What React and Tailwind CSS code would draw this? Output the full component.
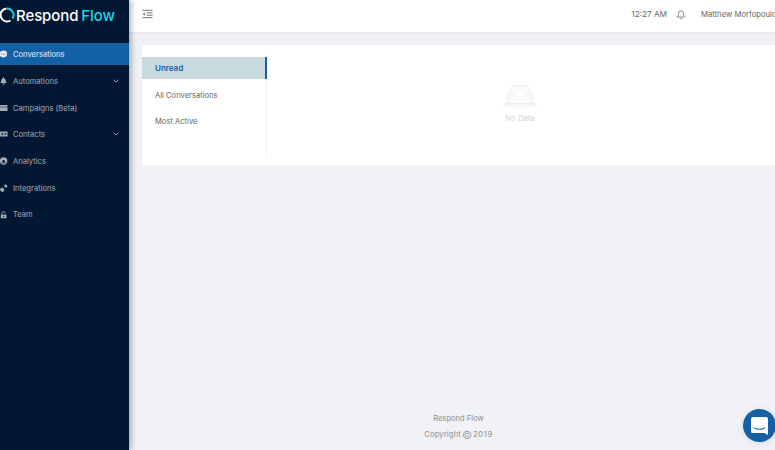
import React from 'react';
import { ChevronDown, Bell } from 'lucide-react';

function ChatIcon() {
  return (
    <svg viewBox="0 0 8 8" className="w-[8px] h-[8px]" fill="currentColor">
      <ellipse cx="3.4" cy="4" rx="3.7" ry="3.4" />
      <circle cx="1.800" cy="4" r="0.5" fill="#1460a5" />
      <circle cx="3.400" cy="4" r="0.5" fill="#1460a5" />
      <circle cx="5" cy="4" r="0.5" fill="#1460a5" />
    </svg>
  );
}

function RobotIcon() {
  return (
    <svg viewBox="0 0 8 8" className="w-[8px] h-[8px]" fill="currentColor">
      <path d="M3 0.300h1v1.200c1.300.3 1.700 1.200 1.800 2.500l.7 2H.5l.7-2c.1-1.300.5-2.200 1.800-2.500z" />
      <rect x="2.300" y="6.500" width="2.400" height="1.100" rx="0.500" />
    </svg>
  );
}

function CampaignIcon() {
  return (
    <svg viewBox="0 0 8 8" className="w-[8px] h-[8px]" fill="currentColor">
      <rect x="0" y="1" width="7.500" height="1.700" rx="0.300" />
      <rect x="0" y="3.300" width="7.500" height="3.700" rx="0.300" />
    </svg>
  );
}

function ContactIcon() {
  return (
    <svg viewBox="0 0 8 8" className="w-[8px] h-[8px]" fill="currentColor">
      <path d="M0 1.500h7.500v5H0z" />
      <circle cx="2.200" cy="3.500" r="0.700" fill="#011732" />
      <rect x="1.200" y="4.500" width="2" height="0.800" fill="#011732" />
      <rect x="4.200" y="3" width="2.300" height="0.600" fill="#011732" />
      <rect x="4.200" y="4.400" width="2.300" height="0.600" fill="#011732" />
    </svg>
  );
}

function AnalyticsIcon() {
  return (
    <svg viewBox="0 0 8 8" className="w-[8px] h-[8px]" fill="currentColor">
      <circle cx="3.600" cy="4" r="3.700" />
      <circle cx="3.600" cy="4.300" r="1.200" fill="#011732" />
      <rect x="1" y="5.600" width="5.200" height="0.600" fill="#011732" />
    </svg>
  );
}

function PlugIcon() {
  return (
    <svg viewBox="0 0 8 8" className="w-[8px] h-[8px]" fill="currentColor">
      <path d="M0.200 4.700l2.300-1.300 2 2-1.200 2.300-1.300.2-2-2z" />
      <path d="M3.800 1.800l1.800-1.500 2 2-1.500 1.800z" />
    </svg>
  );
}

function LockIcon() {
  return (
    <svg viewBox="0 0 8 8" className="w-[8px] h-[8px]" fill="none">
      <path d="M1.800 3.500V2.300a1.700 1.700 0 0 1 3.400 0" stroke="currentColor" strokeWidth="0.900" />
      <rect x="0.800" y="3.500" width="5.700" height="3.800" rx="0.400" fill="currentColor" />
      <rect x="3.200" y="4.800" width="1" height="1.200" fill="#011732" />
    </svg>
  );
}

const menu = [
  { label: 'Conversations', icon: ChatIcon, active: true },
  { label: 'Automations', icon: RobotIcon, arrow: true },
  { label: 'Campaigns (Beta)', icon: CampaignIcon },
  { label: 'Contacts', icon: ContactIcon, arrow: true },
  { label: 'Analytics', icon: AnalyticsIcon },
  { label: 'Integrations', icon: PlugIcon },
  { label: 'Team', icon: LockIcon },
];

function Sidebar() {
  return (
    <aside className="w-[129px] shrink-0 h-full bg-[#011732] shadow-[2px_0_6px_rgba(0,21,41,0.35)] z-10 overflow-hidden">
      {/* Logo */}
      <div className="h-[32px] flex items-center pb-[2px] -ml-[1px]">
        <svg viewBox="0 0 16 16" className="w-[16px] h-[16px] shrink-0" fill="none">
          <path d="M8 1.500a6.500 6.500 0 0 1 5.500 10" stroke="#13d0e0" strokeWidth="2" />
          <path d="M11.500 13.500a6.500 6.500 0 1 1-4-12" stroke="#ffffff" strokeWidth="2" />
        </svg>
        <span className="text-[15px] font-medium text-white ml-[1px] leading-none whitespace-nowrap tracking-[-0.1px]">Respond</span>
        <span className="text-[15px] font-medium text-[#13d8e8] ml-[3px] leading-none whitespace-nowrap tracking-[-0.1px]">Flow</span>
      </div>
      <nav className="mt-[11.4px] flex flex-col gap-[4.7px]">
        {menu.map((m) => {
          const Icon = m.icon;
          return (
            <div
              key={m.label}
              className={
                m.active
                  ? 'h-[22px] flex items-center bg-[#1460a5] text-white/90'
                  : 'h-[22px] flex items-center text-[#a6adb4]'
              }
            >
              <Icon />
              <span className="ml-[5px] pt-[1px] text-[7.6px] whitespace-nowrap">{m.label}</span>
              {m.arrow && <ChevronDown className="w-[8px] h-[8px] ml-auto mr-[9px]" strokeWidth={2.5} />}
            </div>
          );
        })}
      </nav>
    </aside>
  );
}

function Header() {
  return (
    <header className="h-[32px] shrink-0 bg-white flex items-center pb-[3px] shadow-[0_1px_3px_rgba(0,21,41,0.05)]">
      <svg viewBox="0 0 12 10" className="w-[11px] h-[10px] ml-[13px] -mt-[1px] text-[#555]" fill="none" stroke="currentColor" strokeWidth="0.9">
        <path d="M0.500 1h11M5 3.700h6.500M5 6.300h6.500M0.500 9h11" />
        <path d="M3 3.300L0.800 5 3 6.700z" fill="currentColor" stroke="none" />
      </svg>
      <span className="ml-auto text-[8.200px] text-[#666] whitespace-nowrap">12:27 AM</span>
      <Bell className="w-[10px] h-[10px] ml-[9px] text-[#444]" strokeWidth={1.6} />
      <span className="w-[74px] ml-[15px] shrink-0 overflow-hidden text-[7.700px] text-[#666] whitespace-nowrap">Matthew Morfopoulos</span>
    </header>
  );
}

const tabs = ['Unread', 'All Conversations', 'Most Active'];

function Card() {
  return (
    <section className="bg-white h-[120px] pt-[12px] flex items-start">
      <div className="w-[125px] h-[99px] shrink-0 flex flex-col gap-[4.8px] border-r border-[#f0f0f0]">
        {tabs.map((t, i) => (
          <div
            key={t}
            className={
              i === 0
                ? 'h-[22px] flex items-center pl-[13px] bg-[#c8d9e0] text-[#1460a5] font-semibold text-[8px] border-r-2 border-[#1460a5] -mr-[1px]'
                : 'h-[22px] flex items-center pl-[13px] pt-[1px] text-[#666] text-[7.600px]'
            }
          >
            {t}
          </div>
        ))}
      </div>
      {/* Empty state */}
      <div className="flex-1 flex flex-col items-center pt-[27px] pr-[2px]">
        <svg viewBox="0 0 36 24" className="w-[36px] h-[24px]" fill="none">
          <ellipse cx="18" cy="20.500" rx="18" ry="3" fill="#f7f7f7" />
          <path d="M11 1.500h14l5 7.500v10.500H6V9z" fill="#fbfbfb" stroke="#ebebeb" strokeWidth="0.800" />
          <path d="M6 9h7.500c0 2.500 1.800 3.500 4.500 3.500s4.500-1 4.500-3.500H30" fill="#ffffff" stroke="#ebebeb" strokeWidth="0.800" />
        </svg>
        <span className="mt-[5px] text-[7.700px] text-[#d4d4d4]">No Data</span>
      </div>
    </section>
  );
}

function Footer() {
  return (
    <footer className="mt-auto pb-[10px] flex flex-col items-center gap-[6px] text-[7.600px] leading-[10px] text-[#8e8e8e]">
      <span>Respond Flow</span>
      <span className="h-[10px] flex items-center tracking-[0.15px]">
        Copyright
        <span className="mx-[1px] text-[11px] font-light leading-[10px]">©</span>
        <span className="tracking-[0.6px]">2019</span>
      </span>
    </footer>
  );
}

export default function App() {
  return (
    <div className="relative w-[775px] h-[450px] overflow-hidden flex bg-[#f0f2f5] font-['Inter',sans-serif]">
      <Sidebar />
      <div className="flex-1 min-w-0 flex flex-col">
        <Header />
        <main className="flex-1 flex flex-col pt-[13px] pl-[13px]">
          <Card />
          <Footer />
        </main>
      </div>
      {/* Chat launcher */}
      <button className="absolute left-[743px] top-[409px] w-[33px] h-[33px] rounded-full bg-[#1460a5] flex items-center justify-center shadow-[0_1px_6px_rgba(0,0,0,0.1)]">
        <svg viewBox="0 0 18 19" className="w-[17px] h-[18px]">
          <path d="M2 0h14a2 2 0 0 1 2 2v17l-4-2H2a2 2 0 0 1-2-2V2a2 2 0 0 1 2-2z" fill="#ffffff" />
          <path d="M3.500 11.500c3 2 8 2 11 0" stroke="#1460a5" strokeWidth="1.100" fill="none" strokeLinecap="round" />
        </svg>
      </button>
    </div>
  );
}
